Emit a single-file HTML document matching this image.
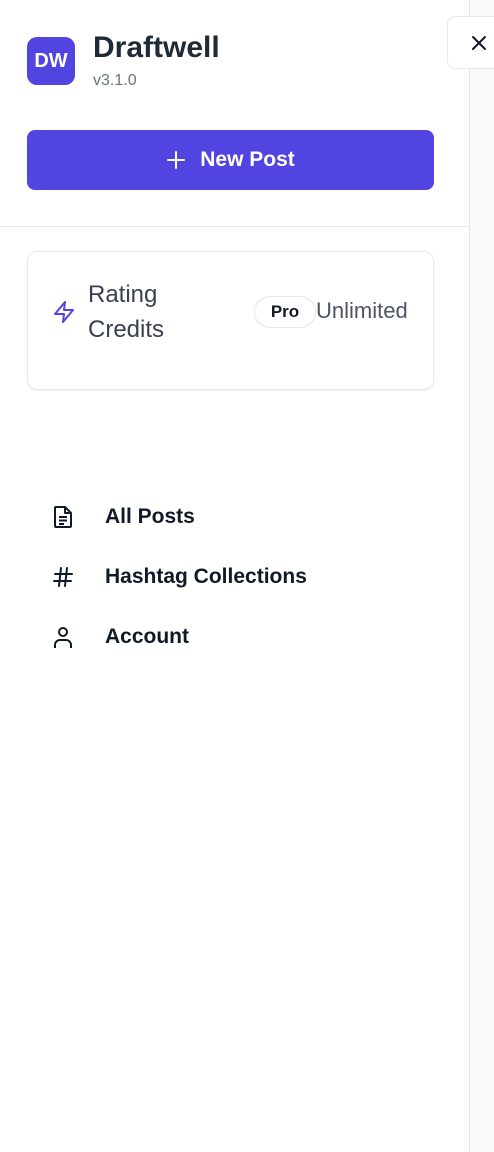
<!DOCTYPE html>
<html><head><style>
*{box-sizing:border-box;margin:0;padding:0}
body{width:494px;height:1152px;background:#f9fafb;font-family:"Liberation Sans",sans-serif;position:relative;overflow:hidden}
.side{position:absolute;left:0;top:0;width:470px;height:1152px;background:#fff;border-right:1px solid #e5e7eb}
.logo{position:absolute;left:27px;top:37px;width:48px;height:48px;border-radius:10px;background:#5244e0;color:#fff;font-weight:700;font-size:20px;display:flex;align-items:center;justify-content:center}
.title{position:absolute;left:93px;top:31px;font-size:30px;font-weight:700;color:#1f2937}
.ver{position:absolute;left:93px;top:72px;font-size:16px;color:#6b7280}
.btn{position:absolute;left:27px;top:130px;width:407px;height:60px;border-radius:8px;background:#5244e0;color:#fff;font-size:21px;font-weight:700;display:flex;align-items:center;justify-content:center;gap:14px}
.hr{position:absolute;left:0;top:226px;width:470px;height:1px;background:#e5e7eb}
.card{position:absolute;left:27px;top:251px;width:407px;height:139px;border:1px solid #e5e7eb;border-radius:10px;box-shadow:0 1px 2px rgba(0,0,0,.05)}
.rc{position:absolute;left:88px;top:277px;font-size:24px;line-height:35px;color:#374151}
.pro{position:absolute;left:254px;top:296px;width:62px;height:32px;border:1px solid #e5e7eb;border-radius:16px;font-size:17px;font-weight:700;color:#111827;display:flex;align-items:center;justify-content:center}
.unl{position:absolute;left:316px;top:298px;font-size:22px;color:#4b5563}
.nav{position:absolute;left:105px;font-size:21px;font-weight:700;color:#111827}
.ic{position:absolute;left:52px}
.close{position:absolute;left:447px;top:16px;width:60px;height:53px;border:1px solid #e5e7eb;border-radius:8px;background:#fff}
</style></head><body>
<div class="side">
<div class="logo">DW</div>
<div class="title">Draftwell</div>
<div class="ver">v3.1.0</div>
<div class="btn"><svg width="20" height="20" viewBox="0 0 20 20" stroke="#fff" stroke-width="2" stroke-linecap="round"><path d="M10 2v16M2 10h16"/></svg>New Post</div>
<div class="hr"></div>
<div class="card"></div>
<svg class="ic" style="left:52px;top:300px" width="24" height="24" viewBox="0 0 24 24" fill="none" stroke="#5244e0" stroke-width="2" stroke-linejoin="round"><path d="M13 2L3 14h9l-1 8 10-12h-9l1-8z"/></svg>
<div class="rc">Rating<br>Credits</div>
<div class="pro">Pro</div>
<div class="unl">Unlimited</div>
<svg class="ic" style="top:505px" width="22" height="24" viewBox="0 0 22 24" fill="none" stroke="#111827" stroke-width="2" stroke-linejoin="round"><path d="M3 3a1 1 0 0 1 1-1h9l6 6v13a1 1 0 0 1-1 1H4a1 1 0 0 1-1-1z M13 2v6h6 M7 12h8M7 15.5h8M7 19h5"/></svg>
<div class="nav" style="top:505px">All Posts</div>
<svg class="ic" style="top:566px" width="22" height="22" viewBox="0 0 22 22" fill="none" stroke="#111827" stroke-width="2" stroke-linecap="round"><path d="M3 8h17M2 15h17M9 2L7 20M15 2l-2 18"/></svg>
<div class="nav" style="top:565px">Hashtag Collections</div>
<svg class="ic" style="top:625px" width="22" height="24" viewBox="0 0 22 24" fill="none" stroke="#111827" stroke-width="2"><circle cx="11" cy="7" r="4"/><path d="M3 23v-3a5 5 0 0 1 5-5h6a5 5 0 0 1 5 5v3"/></svg>
<div class="nav" style="top:625px">Account</div>
</div>
<div class="close"><svg style="position:absolute;left:23px;top:18px" width="16" height="16" viewBox="0 0 16 16" stroke="#111827" stroke-width="2" stroke-linecap="round"><path d="M2 2l12 12M14 2L2 14"/></svg></div>
</body></html>
